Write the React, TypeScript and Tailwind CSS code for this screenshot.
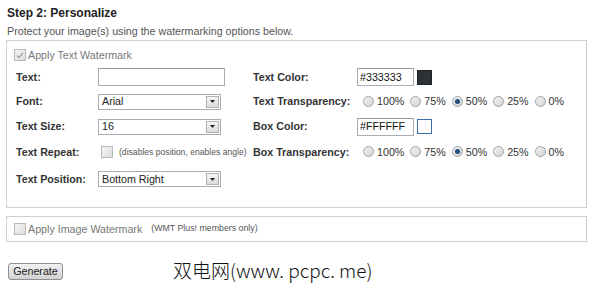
import React from "react";

const font = "font-['Liberation_Sans',Arial,sans-serif]";

function Radio({ checked }: { checked?: boolean }) {
  return (
    <span className="flex h-[11px] w-[11px] items-center justify-center rounded-full border border-[#9ca3ab] bg-gradient-to-br from-[#f2f2f2] to-[#d4d4d4]">
      {checked && <span className="h-[5px] w-[5px] rounded-full bg-[#1f4f7a]" />}
    </span>
  );
}

function RadioGroup({ value }: { value: string }) {
  const opts = ["100%", "75%", "50%", "25%", "0%"];
  return (
    <div className="ml-[6px] flex items-center text-[10.7px] text-[#333]">
      {opts.map((o) => (
        <label key={o} className="mr-[6px] flex items-center">
          <Radio checked={o === value} />
          <span className="ml-[3px]">{o}</span>
        </label>
      ))}
    </div>
  );
}

function Select({ value }: { value: string }) {
  return (
    <div className="flex h-[16px] w-[123px] items-center justify-between border border-[#a9adb3] bg-white pl-[3px] pr-[1px] text-[10.7px] text-[#222]">
      <span>{value}</span>
      <span className="flex h-[12px] w-[13px] items-center justify-center border border-[#b3b3b3] bg-gradient-to-b from-[#f6f6f6] to-[#dadada]">
        <svg width="5" height="3" viewBox="0 0 5 3">
          <path d="M0 0h5L2.5 3z" fill="#222" />
        </svg>
      </span>
    </div>
  );
}

function TextBox({ value, w }: { value?: string; w: string }) {
  return (
    <div
      className={`flex h-[18px] ${w} items-center border border-[#abadb3] border-t-[#9a9ca3] bg-white pl-[2px] text-[10.7px] text-[#111]`}
    >
      {value}
    </div>
  );
}

function Checkbox({ checked }: { checked?: boolean }) {
  return (
    <span className="flex h-[12px] w-[12px] items-center justify-center border border-[#b8b8b8] bg-gradient-to-br from-[#f4f4f4] to-[#dedede]">
      {checked && (
        <svg width="8" height="7" viewBox="0 0 8 7">
          <path d="M1 3.5l2 2L7 1" stroke="#a8a8a8" strokeWidth="1.4" fill="none" />
        </svg>
      )}
    </span>
  );
}

const label = "text-[10.7px] font-bold text-[#333]";

export default function App() {
  return (
    <div className={`h-[291px] w-[589px] overflow-hidden bg-white ${font} text-[#333]`}>
      <div className="pl-[7px] pt-[6px]">
        <h2 className="text-[12px] font-bold leading-[15px] text-[#222]">Step 2: Personalize</h2>
        <p className="mt-[3px] text-[10.7px] leading-[14px] text-[#555]">
          Protect your image(s) using the watermarking options below.
        </p>
      </div>

      <div className="ml-[6px] mt-[2px] w-[581px] border border-[#cfcfcf] pb-[14px] pl-[7px] pt-[7px]">
        <div className="flex h-[14px] items-center text-[10.7px] text-[#777]">
          <Checkbox checked />
          <span className="ml-[2px]">Apply Text Watermark</span>
        </div>

        <div className="mt-[3px] grid grid-cols-[82px_155px_104px_1fr] grid-rows-[24px_25px_25px_26px_28px] items-center pl-[2px]">
          <span className={label}>Text:</span>
          <TextBox w="w-[127px]" />
          <span className={label}>Text Color:</span>
          <div className="flex items-center">
            <TextBox w="w-[57px]" value="#333333" />
            <span className="ml-[3px] h-[15px] w-[15px] border border-[#1f2226] bg-[#2c3136]" />
          </div>

          <span className={label}>Font:</span>
          <Select value="Arial" />
          <span className={label}>Text Transparency:</span>
          <RadioGroup value="50%" />

          <span className={label}>Text Size:</span>
          <Select value="16" />
          <span className={label}>Box Color:</span>
          <div className="flex items-center">
            <TextBox w="w-[57px]" value="#FFFFFF" />
            <span className="ml-[3px] h-[15px] w-[15px] border border-[#3b6ea8] bg-white" />
          </div>

          <span className={label}>Text Repeat:</span>
          <div className="flex items-center pl-[3px]">
            <Checkbox />
            <span className="ml-[6px] whitespace-nowrap text-[8.6px] text-[#555]">(disables position, enables angle)</span>
          </div>
          <span className={label}>Box Transparency:</span>
          <RadioGroup value="50%" />

          <span className={label}>Text Position:</span>
          <Select value="Bottom Right" />
        </div>
      </div>

      <div className="ml-[6px] mt-[8px] flex h-[26px] w-[581px] items-center border border-[#cfcfcf] pl-[7px]">
        <Checkbox />
        <span className="ml-[2px] text-[10.7px] text-[#777]">Apply Image Watermark</span>
        <span className="ml-[9px] text-[8.8px] text-[#555]">(WMT Plus! members only)</span>
      </div>

      <div className="mt-[19px] flex items-center pl-[8px]">
        <button className="h-[17px] w-[55px] rounded-[3px] border border-[#8e8f8f] bg-gradient-to-b from-[#f2f2f2] to-[#d2d2d2] text-[10.7px] leading-[15px] text-[#222]">
          Generate
        </button>
        <span className="ml-[110px] -mt-[3px] font-['Noto_Sans_CJK_SC',sans-serif] text-[19px] font-light leading-[24px] text-[#111]">
          双电网(www. pcpc. me)
        </span>
      </div>
    </div>
  );
}
